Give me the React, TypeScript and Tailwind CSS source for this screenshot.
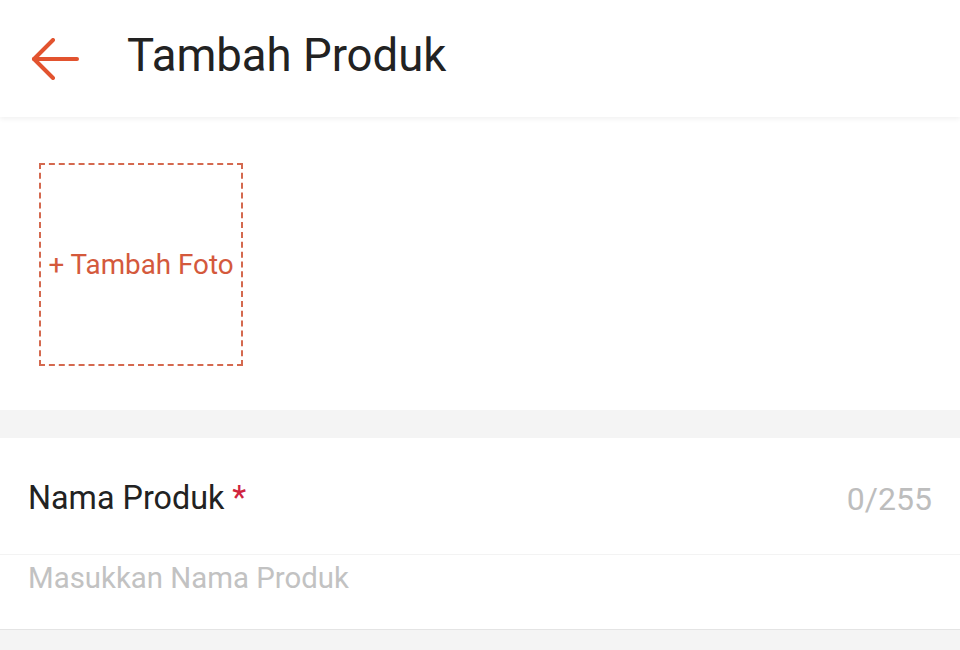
export default function App() {
  return (
    <div className="min-h-[650px] w-[960px] bg-[#f4f4f4] font-['Roboto',sans-serif]">
      <header className="relative z-10 flex h-[117px] items-center bg-white shadow-[0_2px_5px_rgba(0,0,0,0.06)]">
        <button className="ml-[31px] flex h-[44px] w-[50px] items-center">
          <svg width="48" height="42" viewBox="0 0 48 42" fill="none" stroke="#e2532f" strokeWidth="4" strokeLinecap="round" strokeLinejoin="round">
            <path d="M46 21H3" />
            <path d="M22 2 3 21l19 19" />
          </svg>
        </button>
        <h1 className="mb-[6px] ml-[46px] text-[45.5px] leading-none text-[#222]">Tambah Produk</h1>
      </header>

      <section className="bg-white pt-[46px] pb-[44px] pl-[39px]">
        <div className="flex h-[203px] w-[204px] items-center justify-center border-2 border-dashed border-[#d4694f]">
          <span className="text-[27.8px] text-[#d4593c]">+ Tambah Foto</span>
        </div>
      </section>

      <div className="h-[28px]" />

      <section className="border-b border-[#e4e4e4] bg-white">
        <div className="flex h-[117px] items-center justify-between border-b border-[#f3f3f3] pt-[5px] pl-[28px] pr-[28px]">
          <div className="text-[32.3px] text-[#222]">
            Nama Produk <span className="text-[#d0243e]">*</span>
          </div>
          <span className="text-[32px] text-[#bdbdbd]">0/255</span>
        </div>
        <div className="flex h-[74px] items-start pl-[28px]">
          <input
            placeholder="Masukkan Nama Produk"
            className="mt-[1px] w-full bg-transparent text-[29.4px] text-[#222] outline-none placeholder:text-[#c2c2c2]"
          />
        </div>
      </section>
    </div>
  )
}
